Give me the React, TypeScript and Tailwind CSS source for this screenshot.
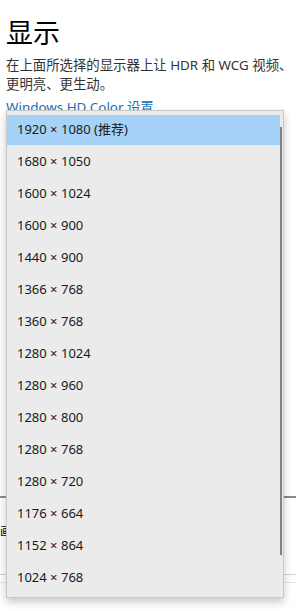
import React from "react";

const resolutions = [
  "1920 × 1080 (推荐)",
  "1680 × 1050",
  "1600 × 1024",
  "1600 × 900",
  "1440 × 900",
  "1366 × 768",
  "1360 × 768",
  "1280 × 1024",
  "1280 × 960",
  "1280 × 800",
  "1280 × 768",
  "1280 × 720",
  "1176 × 664",
  "1152 × 864",
  "1024 × 768",
];

const font = { fontFamily: '"Noto Sans", "Noto Sans CJK SC", sans-serif' };

export default function App() {
  return (
    <div
      className="relative w-[296px] h-[611px] overflow-hidden bg-white text-[#1f1f1f]"
      style={font}
    >
      {/* page behind the menu */}
      <div className="pl-[6px] pt-[14px]">
        <h1 className="text-[27px] leading-[38px] font-normal text-black">显示</h1>
        <p className="mt-[4px] text-[13.4px] leading-[19px] text-[#333] whitespace-nowrap">
          在上面所选择的显示器上让 HDR 和 WCG 视频、
          <br />
          更明亮、更生动。
        </p>
        <div className="mt-[4px] text-[13.4px] leading-[19px] text-[#1a6fb5]">
          Windows HD Color 设置
        </div>
      </div>

      <div className="mt-[379px] border-t-2 border-[#8a8a8a]" />
      <div className="h-[76px] pt-[24px] pl-0 text-[12px] leading-[19px] text-black">画</div>
      <div className="border-t border-[#d4d4d4]" />
      <div className="mt-[7px] border-t border-[#e4e4e4]" />

      {/* dropdown menu */}
      <div className="absolute left-[6px] top-[110px] w-[278px] h-[488px] bg-[#ebebeb] border border-[#c9c9c9] shadow-[0_4px_8px_rgba(0,0,0,0.22)] py-[3px]">
        <ul>
          {resolutions.map((r, i) => (
            <li key={r} className="h-[32px] flex items-center mr-[3px]">
              <div
                className={
                  "w-full h-[30px] flex items-center pl-[10px] text-[13px] text-[#1a1a1a] " +
                  (i === 0 ? "bg-[#a6d2f7]" : "")
                }
              >
                {r}
              </div>
            </li>
          ))}
        </ul>
        <div className="absolute right-[1px] top-[16px] w-[2px] h-[428px] bg-[#828282]" />
      </div>
    </div>
  );
}
